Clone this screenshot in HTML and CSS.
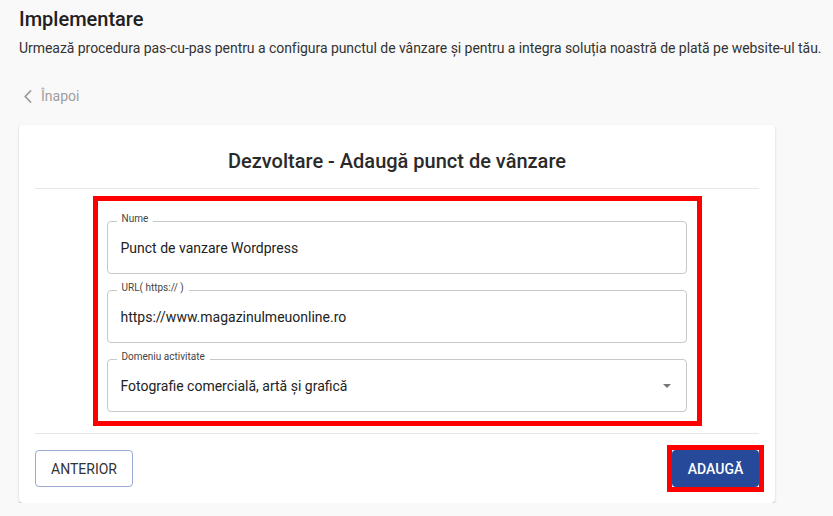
FILE: index.html
```html
<!DOCTYPE html>
<html lang="ro">
<head>
<meta charset="utf-8">
<title>Implementare</title>
<link rel="stylesheet" href="styles.css">
</head>
<body>
<header class="page-head">
  <h1 class="page-title">Implementare</h1>
  <p class="page-sub">Urmează procedura pas-cu-pas pentru a configura punctul de vânzare și pentru a integra soluția noastră de plată pe website-ul tău.</p>
  <a class="back-link" href="#">
    <svg class="back-icon" width="8" height="13" viewBox="0 0 8 13"><path d="M6.5 1 L1.2 6.5 L6.5 12" fill="none" stroke="#9a9a9a" stroke-width="1.8" stroke-linecap="round" stroke-linejoin="round"/></svg>
    <span>Înapoi</span>
  </a>
</header>

<section class="card">
  <h2 class="card-title">Dezvoltare - Adaugă punct de vânzare</h2>
  <hr class="divider">
  <div class="form-box">
    <div class="field">
      <span class="field-label">Nume</span>
      <span class="field-value">Punct de vanzare Wordpress</span>
    </div>
    <div class="field">
      <span class="field-label">URL( https:// )</span>
      <span class="field-value">https://www.magazinulmeuonline.ro</span>
    </div>
    <div class="field">
      <span class="field-label">Domeniu activitate</span>
      <span class="field-value">Fotografie comercială, artă și grafică</span>
      <span class="caret"></span>
    </div>
  </div>
  <hr class="divider divider-bottom">
  <div class="actions">
    <button class="btn btn-outline">ANTERIOR</button>
    <span class="btn-highlight"><button class="btn btn-primary">ADAUGĂ</button></span>
  </div>
</section>
</body>
</html>
```

FILE: styles.css
```css
* { box-sizing: border-box; }

body {
  margin: 0;
  background: #f9f9f9;
  font-family: Roboto, "Liberation Sans", Arial, sans-serif;
  color: #222;
}

.page-head {
  padding: 7px 0 0 19px;
}

.page-title {
  margin: 0;
  font-size: 20px;
  line-height: 24px;
  font-weight: 500;
  color: #212121;
}

.page-sub {
  margin: 7px 0 0;
  font-size: 14px;
  line-height: 20px;
  letter-spacing: -0.05px;
  color: #333;
}

.back-link {
  display: flex;
  width: max-content;
  align-items: center;
  gap: 9px;
  margin: 28px 0 0 5px;
  height: 20px;
  font-size: 14px;
  line-height: 20px;
  color: #9e9e9e;
  text-decoration: none;
}

.back-icon { display: block; }

.card {
  margin: 19px 0 0 19px;
  width: 756px;
  background: #fff;
  border-radius: 4px;
  box-shadow: 0 2px 1px -1px rgba(0,0,0,0.2), 0 1px 1px 0 rgba(0,0,0,0.14), 0 1px 3px 0 rgba(0,0,0,0.12);
  padding: 24px 16px 16px;
}

.card-title {
  margin: 0;
  text-align: center;
  font-size: 20px;
  line-height: 24px;
  font-weight: 500;
  color: #2a2a2a;
}

.divider {
  margin: 15px 0 0;
  border: 0;
  height: 1px;
  background: #e8e8e8;
}

.form-box {
  width: 609px;
  margin: 7px auto 0;
  border: 5px solid #ff0000;
  padding: 20px 10px 9px 9px;
  display: flex;
  flex-direction: column;
  gap: 16px;
}

.field {
  position: relative;
  height: 53px;
  border: 1px solid #c8c8c8;
  border-radius: 4px;
  display: flex;
  align-items: center;
  padding: 0 14px 0 13px;
}

.field-label {
  position: absolute;
  top: -9px;
  left: 9px;
  padding: 0 5px;
  background: #fff;
  font-size: 10px;
  line-height: 12px;
  color: #444;
}

.field-value {
  font-size: 14px;
  line-height: 20px;
  color: #222;
}

.caret {
  margin-left: auto;
  width: 0;
  height: 0;
  border-left: 4px solid transparent;
  border-right: 4px solid transparent;
  border-top: 4px solid #777;
  margin-right: 1px;
}

.divider-bottom {
  margin-top: 7px;
}

.actions {
  margin-top: 16px;
  display: flex;
  justify-content: space-between;
  align-items: center;
}

.btn {
  font-family: Roboto, "Liberation Sans", Arial, sans-serif;
  font-size: 14px;
  line-height: 20px;
  height: 37px;
  border-radius: 4px;
  cursor: pointer;
}

.btn-outline {
  width: 98px;
  background: #fff;
  border: 1px solid #9aaad3;
  color: #333;
  font-weight: 400;
}

.btn-highlight {
  display: block;
  border: 5px solid #ff0000;
  margin: -5px -5px -5px 0;
  background: #fff;
}

.btn-primary {
  display: block;
  width: 87px;
  border: 0;
  background: #264a99;
  color: #fff;
  font-weight: 500;
}
```
